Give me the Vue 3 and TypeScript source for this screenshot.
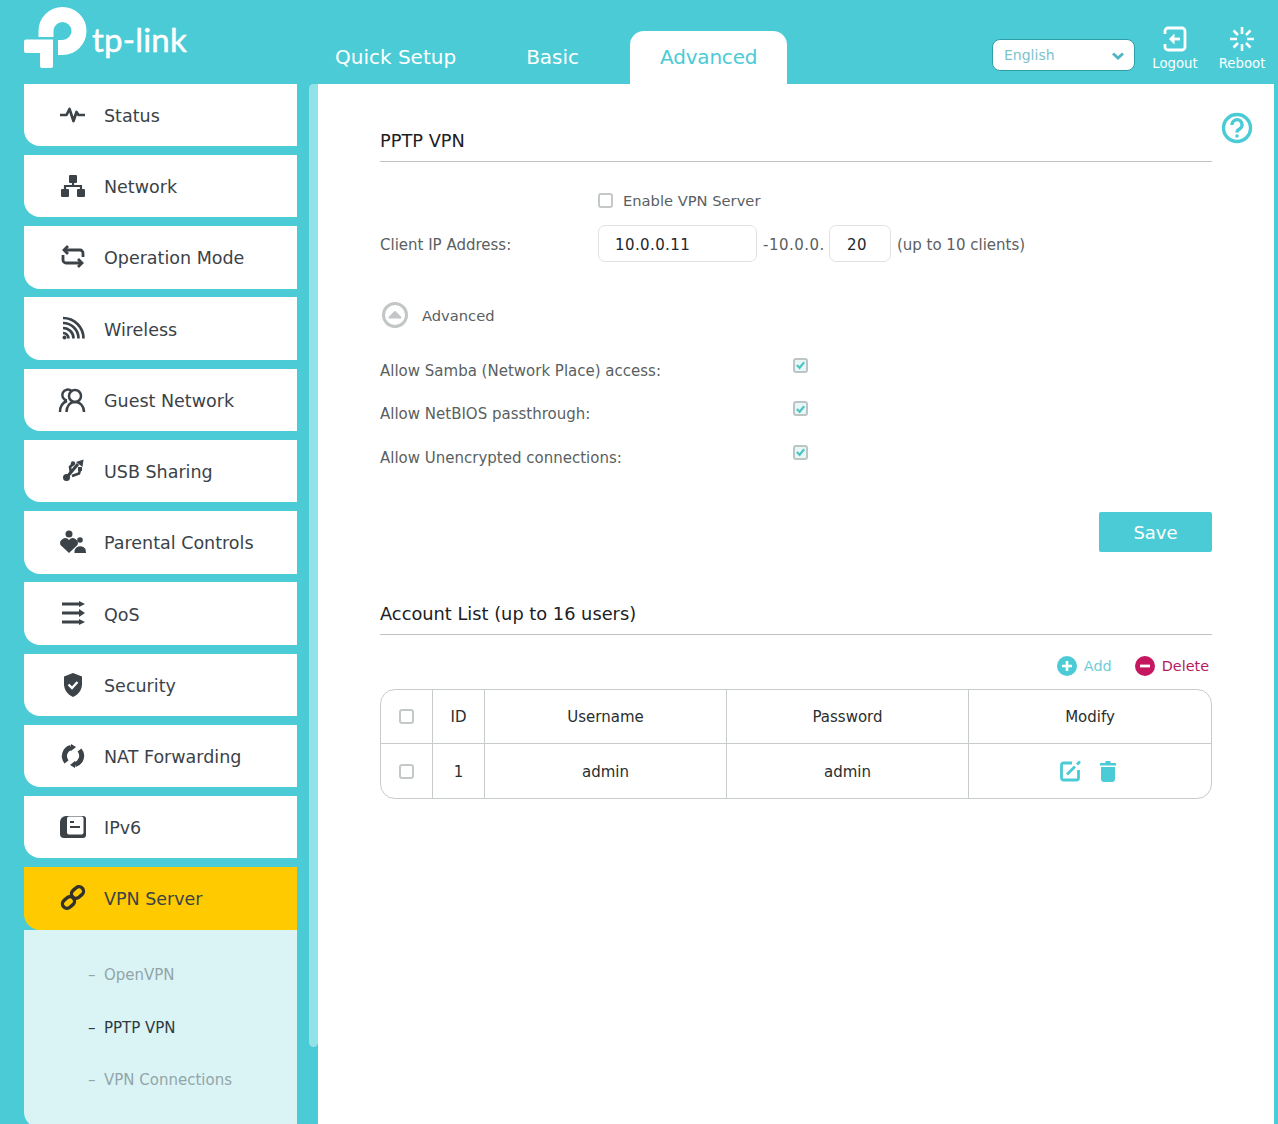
<script setup lang="ts">
interface NavItem { label: string; icon: string; active?: boolean }
const nav: NavItem[] = [
  { label: 'Status', icon: 'status' },
  { label: 'Network', icon: 'network' },
  { label: 'Operation Mode', icon: 'mode' },
  { label: 'Wireless', icon: 'wireless' },
  { label: 'Guest Network', icon: 'guest' },
  { label: 'USB Sharing', icon: 'usb' },
  { label: 'Parental Controls', icon: 'parental' },
  { label: 'QoS', icon: 'qos' },
  { label: 'Security', icon: 'security' },
  { label: 'NAT Forwarding', icon: 'nat' },
  { label: 'IPv6', icon: 'ipv6' },
  { label: 'VPN Server', icon: 'vpn', active: true },
]
const sub = [
  { label: 'OpenVPN', on: false },
  { label: 'PPTP VPN', on: true },
  { label: 'VPN Connections', on: false },
]
const allows = ['Allow Samba (Network Place) access:', 'Allow NetBIOS passthrough:', 'Allow Unencrypted connections:']
</script>

<template>
  <div class="page">
    <header class="top">
      <div class="logo">
        <svg class="mark" width="70" height="70" viewBox="24 0 70 70">
          <path d="M46 37V31A16.500 16.500 0 1 1 62.500 47.500H58" fill="none" stroke="#fff" stroke-width="15" />
          <path d="M26 39.500H53V66A2 2 0 0 1 51 68H42A2 2 0 0 1 40 66V53H26A2 2 0 0 1 24 51V41.500A2 2 0 0 1 26 39.500Z" fill="#fff" />
        </svg>
        <span class="word">tp-link</span>
      </div>
      <nav class="tabs">
        <span class="tab">Quick Setup</span>
        <span class="tab">Basic</span>
        <span class="tab on">Advanced</span>
      </nav>
      <div class="tools">
        <div class="lang"><span>English</span>
          <svg width="14" height="10" viewBox="0 0 14 10"><path d="M2 2.500L7 7L12 2.500" fill="none" stroke="#4fb6c4" stroke-width="3" /></svg>
        </div>
        <div class="tool">
          <svg width="26" height="26" viewBox="0 0 26 26" fill="none" stroke="#fff" stroke-width="2.800">
            <path d="M3 8V5A3 3 0 0 1 6 2H20A3 3 0 0 1 23 5V21A3 3 0 0 1 20 24H6A3 3 0 0 1 3 21V18" />
            <path d="M12.500 7.500L7 13L12.500 18.500Z" fill="#fff" stroke="none" />
            <path d="M12 13H18" />
          </svg>
          <span>Logout</span>
        </div>
        <div class="tool">
          <svg width="26" height="26" viewBox="0 0 26 26" fill="none" stroke="#fff" stroke-width="2.600">
            <path d="M13 1V8M13 18V25M1 13H8M18 13H25M4.500 4.500L9 9M17 17L21.500 21.500M21.500 4.500L17 9M9 17L4.500 21.500" />
          </svg>
          <span>Reboot</span>
        </div>
      </div>
    </header>

    <div class="body">
      <aside class="side">
        <ul class="menu">
          <li v-for="n in nav" :key="n.label" class="item" :class="{ active: n.active }">
            <svg class="ico" width="30" height="30" viewBox="0 0 30 30" fill="#3b4248" stroke="none">
              <path v-if="n.icon === 'status'" d="M2 15H8.500L11.500 9L15.500 21L18.500 12L20.500 15H27" fill="none" stroke="#3b4248" stroke-width="2.700" stroke-linejoin="round" />
              <g v-else-if="n.icon === 'network'">
                <rect x="11" y="4" width="8" height="8" rx="1" />
                <rect x="3" y="18" width="8" height="8" rx="1" />
                <rect x="19" y="18" width="8" height="8" rx="1" />
                <path d="M15 12V15M7 18V15H23V18" fill="none" stroke="#3b4248" stroke-width="2.200" />
              </g>
              <g v-else-if="n.icon === 'mode'" fill="none" stroke="#3b4248" stroke-width="2.800">
                <path d="M6 8H22A3 3 0 0 1 25 11V15" />
                <path d="M24 21H8A3 3 0 0 1 5 18V13" />
                <path d="M10 4L6 8L10 12M20 17L24 21L20 25" />
              </g>
              <g v-else-if="n.icon === 'wireless'" fill="none" stroke="#3b4248" stroke-width="2.700">
                <path d="M5 4A20.500 20.500 0 0 1 25.500 24.500" />
                <path d="M5 9A15.500 15.500 0 0 1 20.500 24.500" />
                <path d="M5 14A10.500 10.500 0 0 1 15.500 24.500" />
                <path d="M5 19A5.500 5.500 0 0 1 10.500 24.500" />
                <circle cx="6.500" cy="23.500" r="2" fill="#3b4248" stroke="none" />
              </g>
              <g v-else-if="n.icon === 'guest'" fill="none" stroke="#3b4248" stroke-width="2.500">
                <path d="M13.500 6A5.500 5.500 0 1 0 9 15.500" />
                <circle cx="17" cy="11" r="6" />
                <path d="M2 27C2 21 5 17.500 9 16" />
                <path d="M8.500 27C8.500 21 12 17 17 17C22 17 26 21 26 27" />
              </g>
              <g v-else-if="n.icon === 'usb'">
                <circle cx="8.500" cy="21.500" r="3.500" />
                <path d="M8.500 21.500L20 8" fill="none" stroke="#3b4248" stroke-width="3" />
                <path d="M13 17L12 11L15 8" fill="none" stroke="#3b4248" stroke-width="2.600" />
                <circle cx="15" cy="7.500" r="2.200" />
                <path d="M14 20L21 17.500L22 14" fill="none" stroke="#3b4248" stroke-width="2.600" />
                <path d="M18 6L25.500 3.500L24.500 11Z" />
                <rect x="20" y="11" width="4" height="4" />
              </g>
              <g v-else-if="n.icon === 'parental'">
                <circle cx="11" cy="7" r="3.500" />
                <path d="M11 26L2.500 18A5 5 0 0 1 11 13A5 5 0 0 1 19.500 18Z" />
                <circle cx="22" cy="13" r="2.800" />
                <path d="M16.500 26A6 6 0 0 1 27.500 22L28 26Z" />
              </g>
              <g v-else-if="n.icon === 'qos'">
                <path d="M4 5H23M4 14H23M4 23H23" fill="none" stroke="#3b4248" stroke-width="3" />
                <path d="M21 2L27 5L21 8ZM21 10L27 14L21 18ZM21 20L27 23L21 26Z" />
              </g>
              <g v-else-if="n.icon === 'security'">
                <path d="M15 3L24 6.500V14C24 20 20 25 15 27C10 25 6 20 6 14V6.500Z" />
                <path d="M10.500 14.500L14 18L19.500 12" fill="none" stroke="#fff" stroke-width="2.400" />
              </g>
              <g v-else-if="n.icon === 'nat'" fill="none" stroke="#3b4248" stroke-width="5">
                <path d="M13 6.500A9 9 0 0 0 8.500 21" />
                <path d="M17 23.500A9 9 0 0 0 21.500 9" />
                <path d="M13 3V10L18 6ZM17 27V20L12 24Z" fill="#3b4248" stroke="none" />
              </g>
              <g v-else-if="n.icon === 'ipv6'">
                <path d="M8 4H25A3 3 0 0 1 28 7V23A3 3 0 0 1 25 26H6A4 4 0 0 1 2 22V10A6 6 0 0 1 8 4Z" />
                <rect x="9" y="4.500" width="16.500" height="18" rx="2" fill="#fff" />
                <path d="M12 10H16M12 15H22" stroke="#3b4248" stroke-width="2" fill="none" />
              </g>
              <g v-else fill="none" stroke="#33312a" stroke-width="3.400">
                <rect x="4" y="15" width="13" height="9" rx="4.500" transform="rotate(-40 10.500 19.500)" />
                <rect x="13" y="5" width="13" height="9" rx="4.500" transform="rotate(-40 19.500 9.500)" />
              </g>
            </svg>
            <span class="nav-label">{{ n.label }}</span>
          </li>
        </ul>
        <ul class="submenu">
          <li v-for="s in sub" :key="s.label" :class="{ on: s.on }"><i>–</i>{{ s.label }}</li>
        </ul>
      </aside>
      <div class="track"></div>

      <main class="main">
        <svg class="help" width="32" height="32" viewBox="0 0 32 32" fill="none" stroke="#4acbd6" stroke-width="3.400">
          <circle cx="16" cy="16" r="13.500" />
          <path d="M11 13A5 5 0 1 1 18.500 17C16.500 18 16 19 16 20.500" />
          <circle cx="16" cy="24" r="1.800" fill="#4acbd6" stroke="none" />
        </svg>
        <h2 class="title first">PPTP VPN</h2>
        <div class="row enable">
          <span class="box"></span><span class="lbl">Enable VPN Server</span>
        </div>
        <div class="row ip">
          <label>Client IP Address:</label>
          <span class="input wide">10.0.0.11</span>
          <span class="txt spaced">-10.0.0.</span>
          <span class="input small">20</span>
          <span class="txt">(up to 10 clients)</span>
        </div>
        <div class="row adv">
          <svg width="28" height="28" viewBox="0 0 28 28">
            <circle cx="14" cy="14" r="11.500" fill="none" stroke="#c2c6c6" stroke-width="3" />
            <path d="M8.500 16.500L14 11L19.500 16.500Z" fill="#c2c6c6" stroke="#c2c6c6" stroke-width="2" stroke-linejoin="round" />
          </svg>
          <span class="lbl">Advanced</span>
        </div>
        <div class="allows">
          <div v-for="a in allows" :key="a" class="row allow">
            <label>{{ a }}</label>
            <span class="box checked">
              <svg width="12" height="12" viewBox="0 0 12 12"><path d="M2 6L5 9L10 3" fill="none" stroke="#4fc4c4" stroke-width="2.400" /></svg>
            </span>
          </div>
        </div>
        <div class="save-row"><button class="save" type="button">Save</button></div>

        <h2 class="title second">Account List (up to 16 users)</h2>
        <div class="ops">
          <span class="op add">
            <svg width="20" height="20" viewBox="0 0 20 20"><circle cx="10" cy="10" r="10" fill="#4acbd6" /><path d="M10 5V15M5 10H15" stroke="#fff" stroke-width="2.600" /></svg>Add
          </span>
          <span class="op del">
            <svg width="20" height="20" viewBox="0 0 20 20"><circle cx="10" cy="10" r="10" fill="#c4175f" /><path d="M5 10H15" stroke="#fff" stroke-width="2.800" /></svg>Delete
          </span>
        </div>
        <div class="table">
          <div class="cell head"><span class="box"></span></div>
          <div class="cell head">ID</div>
          <div class="cell head">Username</div>
          <div class="cell head">Password</div>
          <div class="cell head last">Modify</div>
          <div class="cell"><span class="box"></span></div>
          <div class="cell low">1</div>
          <div class="cell low">admin</div>
          <div class="cell low">admin</div>
          <div class="cell last acts">
            <svg width="24" height="24" viewBox="0 0 24 24" fill="none" stroke="#4acbd6" stroke-width="2.800">
              <path d="M20.500 11V19A2 2 0 0 1 18.500 21H5.500A2 2 0 0 1 3.500 19V6A2 2 0 0 1 5.500 4H14" />
              <path d="M9 15.500L17 7.500M19 5.500L22 2.500" />
            </svg>
            <svg width="20" height="24" viewBox="0 0 20 24" fill="#4acbd6">
              <path d="M3 8H17V20A3 3 0 0 1 14 23H6A3 3 0 0 1 3 20Z" />
              <path d="M2 4H7L8 2H12L13 4H18V6.500H2Z" />
            </svg>
          </div>
        </div>
      </main>
    </div>
  </div>
</template>

<style>
html, body { margin: 0; background: #4acbd6; overflow: hidden; }
</style>

<style scoped>
.page { width: 1278px; height: 1124px; overflow: hidden; background: #4acbd6; font-family: "DejaVu Sans", Verdana, sans-serif; color: #3b4248; }
.top { height: 84px; display: flex; }
.logo { width: 305px; padding-left: 24px; box-sizing: border-box; display: flex; align-items: flex-start; }
.mark { flex: none; }
.word { color: #fff; font-family: Lato, sans-serif; font-size: 33px; font-weight: 400; -webkit-text-stroke: 0.5px #fff; margin: 19px 0 0 -2px; line-height: 40px; letter-spacing: 0.2px; }
.tabs { display: flex; align-items: flex-end; height: 84px; }
.tab { font-size: 20px; color: #fff; height: 53px; line-height: 52px; padding: 0 30px; margin-right: 10px; box-sizing: border-box; }
.tab.on { background: #fff; color: #4acbd6; border-radius: 14px 14px 0 0; margin-left: 11px; letter-spacing: -0.200px; }
.tools { margin-left: auto; display: flex; padding-right: 13px; }
.lang { width: 143px; height: 32px; margin: 39px 17px 0 0; box-sizing: border-box; background: #fff; border: 1px solid #2f9fa9; border-radius: 8px; display: flex; align-items: center; justify-content: space-between; padding: 0 9px 0 11px; font-size: 14px; color: #7cc3cc; }
.lang svg { margin-top: 2px; }
.tool { width: 46px; padding-top: 26px; display: flex; flex-direction: column; align-items: center; color: #fff; font-size: 13.300px; line-height: 18px; }
.tool + .tool { margin-left: 21px; }
.tool svg { margin-bottom: 3px; }
.body { display: flex; height: 1040px; }
.side { width: 273px; margin-left: 24px; flex: none; overflow: hidden; }
.menu { list-style: none; margin: -0.300px 0 0; padding: 0; display: flex; flex-direction: column; gap: 8.850px; }
.item { height: 62.400px; background: #fff; border-bottom-left-radius: 16px; display: flex; align-items: center; font-size: 17.500px; color: #3b4248; }
.item .ico { margin-left: 34px; margin-right: 16px; flex: none; }
.nav-label { margin-top: 2px; }
.item.active { background: #ffcb00; }
.submenu { list-style: none; margin: 0; padding: 19.800px 0 0; background: #daf4f6; height: 198px; border-bottom-left-radius: 16px; box-sizing: border-box; }
.submenu li { height: 52.500px; line-height: 52.500px; font-size: 15px; color: #93a5a8; padding-left: 64px; white-space: nowrap; }
.submenu li i { font-style: normal; display: inline-block; width: 16px; }
.submenu li.on { color: #2f3a40; }
.track { width: 9px; margin-left: 12px; height: 963px; background: #92e2e8; border-radius: 5px 0 5px 5px; flex: none; }
.main { position: relative; background: #fff; flex: none; width: 956px; height: 1040px; box-sizing: border-box; padding: 0 62px; font-size: 15px; color: #5a5f62; }
.help { position: absolute; left: 903px; top: 28px; }
.title { margin: 0; font-size: 17.800px; font-weight: 400; color: #1c2022; border-bottom: 1px solid #bfc3c3; }
.title.first { padding-top: 45px; line-height: 24px; padding-bottom: 8px; }
.title.second { margin-top: 50px; line-height: 24px; padding-bottom: 8px; }
.row { display: flex; align-items: center; }
.box { width: 15px; height: 15px; box-sizing: border-box; border: 2px solid #c4c8c8; border-radius: 3px; display: inline-flex; align-items: center; justify-content: center; flex: none; background: #fff; }
.enable { margin-top: 27px; padding-left: 218px; height: 22px; }
.enable .lbl { margin-left: 10px; font-size: 14.700px; }
.ip { margin-top: 14px; height: 37px; }
.ip label { width: 218px; margin-top: 2px; }
.input { height: 37px; box-sizing: border-box; border: 1px solid #e1e3e3; border-radius: 7px; color: #22282b; display: flex; align-items: center; padding-top: 2px; }
.wide { width: 159px; padding-left: 16px; letter-spacing: 0.400px; }
.small { width: 62px; padding-left: 17px; letter-spacing: 0.500px; }
.txt { margin: 2px 5px 0 6px; }
.spaced { letter-spacing: 0.500px; margin-right: 4px; }
.adv { margin-top: 38px; height: 30px; margin-left: 1px; }
.adv .lbl { margin-left: 13px; font-size: 14.700px; }
.allows { margin-top: 15px; }
.allow { height: 43.500px; }
.allow label { width: 413px; padding-top: 8px; }
.checked { margin-bottom: 3px; background: #e7f7f8; border-color: #bcc4c4; }
.save-row { display: flex; justify-content: flex-end; margin-top: 36.700px; }
.save { width: 113px; height: 40px; border: 0; background: #4acbd6; color: #fff; border-radius: 2px; font: 18px "DejaVu Sans", sans-serif; padding: 0; }
.ops { display: flex; justify-content: flex-end; gap: 23px; padding-right: 3px; margin-top: 21px; height: 33px; align-items: flex-start; }
.op { display: flex; align-items: center; gap: 7px; font-size: 14.400px; }
.add { color: #6fced6; }
.del { color: #b3195f; }
.table { display: grid; grid-template-columns: 52px 52px 242px 242px 1fr; grid-template-rows: 54px 54px; border: 1px solid #c8cbcb; border-radius: 15px; width: 832px; box-sizing: border-box; color: #2a2e30; }
.cell { display: flex; align-items: center; justify-content: center; border-right: 1px solid #c8cbcb; }
.cell:nth-child(-n+5) { border-bottom: 1px solid #c8cbcb; }
.cell.last { border-right: 0; }
.low { padding-top: 2px; box-sizing: border-box; }
.acts { gap: 16px; padding-right: 4px; box-sizing: border-box; }
</style>
